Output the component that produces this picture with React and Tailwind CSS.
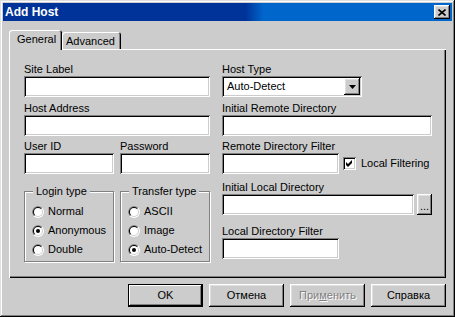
import React from "react";

const sunken =
  "bg-white shadow-[inset_1px_1px_0_#808080,inset_-1px_-1px_0_#ffffff,inset_2px_2px_0_#000000,inset_-2px_-2px_0_#cccccc]";
const raised =
  "bg-[#cccccc] shadow-[inset_-1px_-1px_0_#000000,inset_1px_1px_0_#ffffff,inset_-2px_-2px_0_#808080,inset_2px_2px_0_#dfdfdf]";

const Label = ({ children }) => <div className="h-[13px] leading-[13px] whitespace-nowrap">{children}</div>;

const Field = ({ width }) => <div className={`h-[21px] ${sunken}`} style={{ width }} />;

const Radio = ({ checked, label }) => (
  <div className="flex items-center h-[19px] gap-[4px]">
    <svg width="12" height="12" viewBox="0 0 12 12" className="shrink-0">
      <circle cx="6" cy="6" r="6" fill="#ffffff" />
      <path d="M1.757 10.243A6 6 0 0 1 10.243 1.757Z" fill="#808080" />
      <circle cx="6" cy="6" r="5" fill="#cccccc" />
      <path d="M2.464 9.536A5 5 0 0 1 9.536 2.464Z" fill="#000000" />
      <circle cx="6" cy="6" r="4" fill="#ffffff" />
      {checked && <circle cx="6" cy="6" r="2" fill="#000000" />}
    </svg>
    <span className="leading-[13px] whitespace-nowrap">{label}</span>
  </div>
);

const GroupBox = ({ title, children }) => (
  <div className="relative w-[90px] h-[71px] border border-[#808080] shadow-[1px_1px_0_#ffffff,inset_1px_1px_0_#ffffff] pl-[7px] pt-[10px]">
    <span className="absolute left-[8px] top-[-7px] px-[3px] bg-[#cccccc] leading-[13px] whitespace-nowrap">{title}</span>
    {children}
  </div>
);

const Button = ({ children, isDefault, disabled }) => (
  <div
    className={`w-[75px] h-[23px] flex items-center justify-center ${raised} ${
      isDefault ? "outline outline-1 outline-black -outline-offset-1 shadow-[inset_-2px_-2px_0_#000000,inset_2px_2px_0_#ffffff,inset_-3px_-3px_0_#808080]" : ""
    } ${disabled ? "text-[#808080] [text-shadow:1px_1px_0_#ffffff]" : ""}`}
  >
    {children}
  </div>
);

export default function App() {
  return (
    <div className="w-[455px] h-[317px] bg-[#cccccc] p-[3px] flex flex-col font-['Liberation_Sans',Arial,sans-serif] text-[11px] text-black shadow-[inset_-1px_-1px_0_#000000,inset_1px_1px_0_#dfdfdf,inset_-2px_-2px_0_#808080,inset_2px_2px_0_#ffffff]">
      {/* title bar */}
      <div className="h-[18px] flex items-center justify-between pl-[2px] pr-[2px] bg-[linear-gradient(90deg,#003399_54%,#0066cc_58%)]">
        <span className="text-white font-bold text-[12px] leading-[14px]">Add Host</span>
        <div className={`w-[16px] h-[14px] flex items-center justify-center ${raised}`}>
          <svg width="8" height="7" viewBox="0 0 8 7">
            <path d="M0.5 0.5L7.5 6.5M7.5 0.5L0.5 6.5" stroke="#000" strokeWidth="1.6" />
          </svg>
        </div>
      </div>

      <div className="pl-[6px] pt-[7px]">
        {/* tabs */}
        <div className="flex items-end h-[21px]">
          <div className="relative z-10 w-[53px] h-[20px] -mb-[1px] bg-[#cccccc] rounded-t-[3px] shadow-[inset_1px_1px_0_#ffffff,inset_-1px_0_0_#000000,inset_-2px_0_0_#808080] pl-[8px] pt-[3px] leading-[13px]">
            General
          </div>
          <div className="w-[59px] h-[17px] rounded-t-[3px] shadow-[inset_1px_1px_0_#ffffff,inset_-1px_0_0_#000000,inset_-2px_0_0_#808080] pl-[4px] pt-[3px] leading-[13px]">
            Advanced
          </div>
        </div>

        {/* panel */}
        <div className="w-[437px] h-[229px] flex pl-[15px] pt-[14px] shadow-[inset_1px_1px_0_#ffffff,inset_-1px_-1px_0_#000000,inset_-2px_-2px_0_#808080]">
          <div className="w-[186px] flex flex-col">
            <Label>Site Label</Label>
            <Field width={186} />
            <div className="mt-[5px]">
              <Label>Host Address</Label>
              <Field width={186} />
            </div>
            <div className="mt-[4px] flex gap-[6px]">
              <div>
                <Label>User ID</Label>
                <Field width={90} />
              </div>
              <div>
                <Label>Password</Label>
                <Field width={90} />
              </div>
            </div>
            <div className="mt-[17px] flex gap-[6px]">
              <GroupBox title="Login type">
                <Radio label="Normal" />
                <Radio label="Anonymous" checked />
                <Radio label="Double" />
              </GroupBox>
              <GroupBox title="Transfer type">
                <Radio label="ASCII" />
                <Radio label="Image" />
                <Radio label="Auto-Detect" checked />
              </GroupBox>
            </div>
          </div>

          <div className="ml-[12px] flex flex-col">
            <Label>Host Type</Label>
            <div className={`w-[140px] h-[21px] flex items-center justify-between pl-[5px] pr-[2px] ${sunken}`}>
              <span className="leading-[13px]">Auto-Detect</span>
              <div className={`w-[16px] h-[17px] flex items-center justify-center ${raised}`}>
                <svg width="7" height="4" viewBox="0 0 7 4">
                  <path d="M0 0H7L3.5 4Z" fill="#000" />
                </svg>
              </div>
            </div>
            <div className="mt-[5px]">
              <Label>Initial Remote Directory</Label>
              <Field width={210} />
            </div>
            <div className="mt-[4px]">
              <Label>Remote Directory Filter</Label>
              <div className="flex items-center">
                <Field width={117} />
                <div className={`ml-[4px] w-[13px] h-[13px] ${sunken}`}>
                  <svg width="13" height="13" viewBox="0 0 13 13">
                    <path d="M3 5L5 7L9 3V6L5 10L3 8Z" fill="#000" />
                  </svg>
                </div>
                <span className="ml-[5px] leading-[13px] whitespace-nowrap">Local Filtering</span>
              </div>
            </div>
            <div className="mt-[7px]">
              <Label>Initial Local Directory</Label>
              <div className="flex gap-[3px]">
                <Field width={192} />
                <div className={`w-[15px] h-[21px] flex items-end justify-center pb-[4px] leading-[10px] ${raised}`}>...</div>
              </div>
            </div>
            <div className="mt-[10px]">
              <Label>Local Directory Filter</Label>
              <Field width={117} />
            </div>
          </div>
        </div>

        {/* buttons */}
        <div className="w-[437px] mt-[6px] flex justify-end gap-[6px]">
          <Button isDefault>OK</Button>
          <Button>Отмена</Button>
          <Button disabled>
            При<span className="underline">м</span>енить
          </Button>
          <Button>Справка</Button>
        </div>
      </div>
    </div>
  );
}
